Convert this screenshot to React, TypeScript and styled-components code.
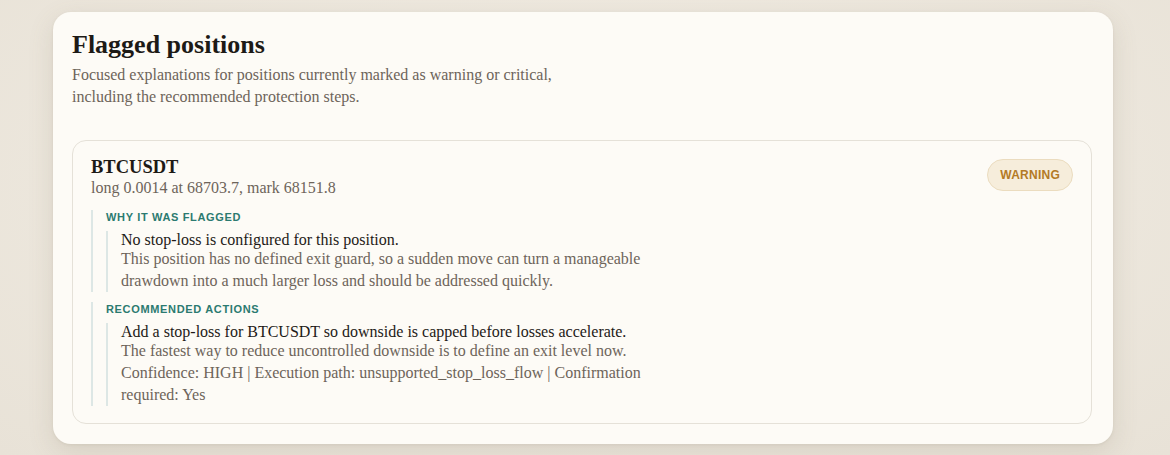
import styled, { createGlobalStyle } from 'styled-components';

const GlobalStyle = createGlobalStyle`
    html, body {
        margin: 0;
        padding: 0;
        background: #ece6dc;
    }
    body {
        font-family: 'Liberation Serif', 'DejaVu Serif', serif;
        color: #1f1c18;
    }
`;

const Page = styled.div`
    min-height: 455px;
    box-sizing: border-box;
    padding: 12px 57px 10px 53px;
    background: radial-gradient(ellipse at 50% 40%, #f3eee5 0%, #e8e2d7 100%);
`;

const Panel = styled.section`
    background: #fdfbf6;
    border-radius: 18px;
    padding: 18px 21px 20px 19px;
    box-shadow: 0 8px 26px rgba(120, 105, 80, 0.16), 0 1px 3px rgba(120, 105, 80, 0.1);
`;

const Title = styled.h2`
    margin: 0;
    font-size: 26px;
    font-weight: 700;
    line-height: 30px;
    color: #1d1a16;
`;

const Intro = styled.p`
    margin: 4px 0 0;
    max-width: 510px;
    font-size: 16px;
    line-height: 22px;
    color: #6d645a;
`;

const PositionCard = styled.article`
    margin-top: 32px;
    border: 1px solid #e5e1d8;
    border-radius: 14px;
    padding: 15px 18px 17px;
    display: flex;
    justify-content: space-between;
    align-items: flex-start;
`;

const Symbol = styled.h3`
    margin: 0;
    font-size: 18.5px;
    font-weight: 700;
    line-height: 22px;
    color: #1d1a16;
`;

const Meta = styled.div`
    font-size: 16px;
    line-height: 20px;
    color: #6d645a;
`;

const Badge = styled.span`
    margin-top: 3px;
    padding: 8px 12px;
    border-radius: 999px;
    background: #f6eddb;
    border: 1px solid #ebdcbf;
    color: #b37a26;
    font-family: 'Liberation Sans', Arial, sans-serif;
    font-size: 12px;
    line-height: 14px;
    font-weight: 700;
    letter-spacing: 0.02em;
`;

const Section = styled.div`
    margin-top: 12px;
    border-left: 2px solid #dde7e5;
    padding-left: 13px;
    & + & {
        margin-top: 10px;
    }
`;

const SectionLabel = styled.div`
    font-family: 'Liberation Sans', Arial, sans-serif;
    font-size: 11px;
    font-weight: 700;
    letter-spacing: 0.06em;
    text-transform: uppercase;
    color: #2b7a70;
    line-height: 14px;
`;

const Item = styled.div`
    margin-top: 7px;
    border-left: 2px solid #dde7e5;
    padding-left: 13px;
    max-width: 535px;
`;

const ItemTitle = styled.div`
    font-size: 16px;
    line-height: 17px;
    color: #1d1a16;
`;

const ItemText = styled.div`
    font-size: 16px;
    line-height: 22px;
    color: #6d645a;
`;

export default function App() {
    return (
        <Page>
            <GlobalStyle />
            <Panel>
                <Title>Flagged positions</Title>
                <Intro>
                    Focused explanations for positions currently marked as warning or critical,
                    including the recommended protection steps.
                </Intro>

                <PositionCard>
                    <div>
                        <Symbol>BTCUSDT</Symbol>
                        <Meta>long 0.0014 at 68703.7, mark 68151.8</Meta>

                        <Section>
                            <SectionLabel>Why it was flagged</SectionLabel>
                            <Item>
                                <ItemTitle>No stop-loss is configured for this position.</ItemTitle>
                                <ItemText>
                                    This position has no defined exit guard, so a sudden move can turn a
                                    manageable drawdown into a much larger loss and should be addressed quickly.
                                </ItemText>
                            </Item>
                        </Section>

                        <Section>
                            <SectionLabel>Recommended actions</SectionLabel>
                            <Item>
                                <ItemTitle>
                                    Add a stop-loss for BTCUSDT so downside is capped before losses accelerate.
                                </ItemTitle>
                                <ItemText>
                                    The fastest way to reduce uncontrolled downside is to define an exit level now.
                                </ItemText>
                                <ItemText>
                                    Confidence: HIGH | Execution path: unsupported_stop_loss_flow | Confirmation
                                    required: Yes
                                </ItemText>
                            </Item>
                        </Section>
                    </div>
                    <Badge>WARNING</Badge>
                </PositionCard>
            </Panel>
        </Page>
    );
}
